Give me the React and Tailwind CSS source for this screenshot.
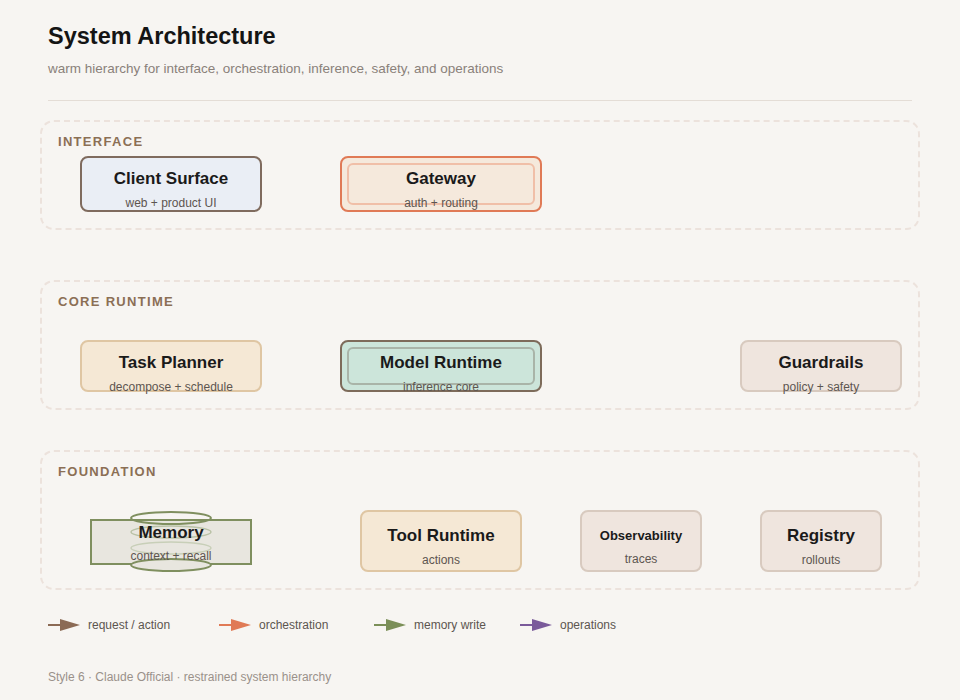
const font = { fontFamily: '"Liberation Sans", Arial, sans-serif' }

const Node = ({ x, y, w, h, title, sub, cls, inner, small }) => (
  <div
    className={`absolute flex flex-col items-center rounded-lg border-2 ${cls}`}
    style={{ left: x, top: y, width: w, height: h }}
  >
    {inner && <div className={`absolute inset-[5px] rounded-md border-2 ${inner}`} />}
    <div className={`relative ${small ? 'mt-[14px] text-[13px]' : 'mt-[8px] text-[17px]'} font-bold text-[#1a1a1a]`}>{title}</div>
    <div className={`relative ${small ? 'mt-[5px]' : 'mt-[3px]'} text-[12px] text-[#5d5550]`}>{sub}</div>
  </div>
)

const Section = ({ label, h, mt, children }) => (
  <div className={`relative mx-[40px] rounded-[14px] border-2 border-dashed border-[#ece2dc] ${mt}`} style={{ height: h }}>
    <div className="absolute left-[16px] top-[10px] text-[13px] font-bold tracking-[0.1em] text-[#8b6f55]">{label}</div>
    {children}
  </div>
)

const Arrow = ({ color }) => (
  <svg width="34" height="14" viewBox="0 0 34 14">
    <line x1="0" y1="7" x2="16" y2="7" stroke={color} strokeWidth="2" />
    <polygon points="12,1 32,7 12,13" fill={color} />
  </svg>
)

export default function App() {
  return (
    <div className="h-[700px] w-[960px] bg-[#f7f5f2] pt-[19px]" style={font}>
      <div className="px-[48px]">
        <h1 className="text-[23.5px] font-bold text-[#141414]">System Architecture</h1>
        <p className="mt-[5px] text-[13.5px] text-[#8a817a]">warm hierarchy for interface, orchestration, inference, safety, and operations</p>
        <div className="mt-[20px] h-px bg-[#e4ddd6]" />
      </div>

      <Section label="INTERFACE" h={110} mt="mt-[19px]">
        <Node x={38} y={34} w={182} h={56} title="Client Surface" sub="web + product UI" cls="bg-[#eaeef5] border-[#7f6b5e]" />
        <Node x={298} y={34} w={202} h={56} title="Gateway" sub="auth + routing" cls="bg-[#f5e9dc] border-[#e07a56]" inner="border-[#f0bfa8]" />
      </Section>

      <Section label="CORE RUNTIME" h={130} mt="mt-[50px]">
        <Node x={38} y={58} w={182} h={52} title="Task Planner" sub="decompose + schedule" cls="bg-[#f5e8d5] border-[#dfc6a3]" />
        <Node x={298} y={58} w={202} h={52} title="Model Runtime" sub="inference core" cls="bg-[#cce5da] border-[#7d6b5a]" inner="border-[#a9b4a8]" />
        <Node x={698} y={58} w={162} h={52} title="Guardrails" sub="policy + safety" cls="bg-[#efe5de] border-[#d8cabf]" />
      </Section>

      <Section label="FOUNDATION" h={140} mt="mt-[40px]">
        <div className="absolute" style={{ left: 48, top: 58, width: 162, height: 62 }}>
          <div className="absolute left-0 top-[9px] h-[46px] w-[162px] border-2 border-[#7f8f5f] bg-[#e8e6df]" />
          <svg className="absolute left-0 top-0" width="162" height="64" viewBox="0 0 162 64">
            <ellipse cx="81" cy="8" rx="40" ry="6" fill="none" stroke="#7f8f5f" strokeWidth="2" />
            <ellipse cx="81" cy="22" rx="40" ry="6" fill="none" stroke="#b9c2a6" strokeWidth="1.5" />
            <ellipse cx="81" cy="38" rx="40" ry="6" fill="none" stroke="#c8cfb8" strokeWidth="1.5" />
            <ellipse cx="81" cy="55" rx="40" ry="6" fill="#e8e6df" stroke="#7f8f5f" strokeWidth="2" />
          </svg>
          <div className="relative mt-[10px] text-center text-[17px] font-bold text-[#1a1a1a]">Memory</div>
          <div className="relative mt-[2px] text-center text-[12px] text-[#5d5550]">context + recall</div>
        </div>
        <Node x={318} y={58} w={162} h={62} title="Tool Runtime" sub="actions" cls="bg-[#f5e8d5] border-[#dfc6a3] pt-[3px]" />
        <Node x={538} y={58} w={122} h={62} title="Observability" sub="traces" small cls="bg-[#efe5de] border-[#d8cabf]" />
        <Node x={718} y={58} w={122} h={62} title="Registry" sub="rollouts" cls="bg-[#efe5de] border-[#d8cabf] pt-[3px]" />
      </Section>

      <div className="mt-[26px] flex items-center px-[48px] text-[12px] text-[#5d5550]">
        <Arrow color="#8b6a55" /><span className="ml-[6px] w-[131px]">request / action</span>
        <Arrow color="#e07a56" /><span className="ml-[6px] w-[115px]">orchestration</span>
        <Arrow color="#7b8f58" /><span className="ml-[6px] w-[106px]">memory write</span>
        <Arrow color="#7a5a9a" /><span className="ml-[6px]">operations</span>
      </div>

      <div className="mt-[34px] px-[48px] text-[12px] text-[#9a918a]">Style 6 · Claude Official · restrained system hierarchy</div>
    </div>
  )
}
